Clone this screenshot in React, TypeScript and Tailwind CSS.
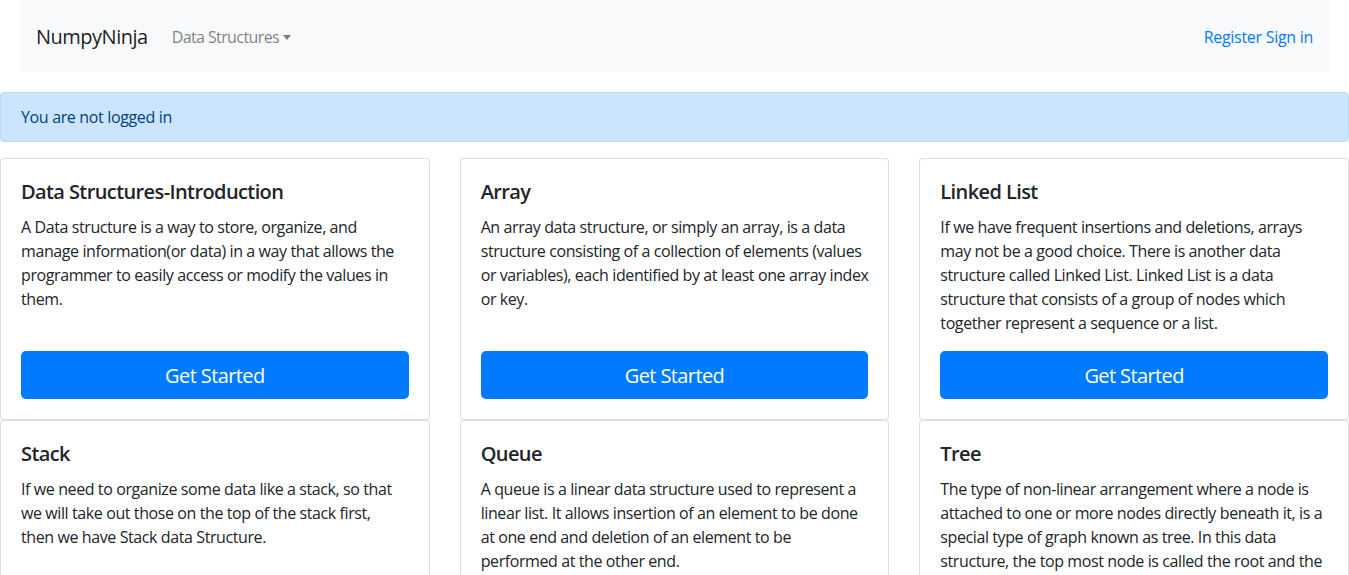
import React from "react";

const cards = [
  {
    title: "Data Structures-Introduction",
    lines: [
      "A Data structure is a way to store, organize, and",
      "manage information(or data) in a way that allows the",
      "programmer to easily access or modify the values in",
      "them.",
    ],
  },
  {
    title: "Array",
    lines: [
      "An array data structure, or simply an array, is a data",
      "structure consisting of a collection of elements (values",
      "or variables), each identified by at least one array index",
      "or key.",
    ],
  },
  {
    title: "Linked List",
    lines: [
      "If we have frequent insertions and deletions, arrays",
      "may not be a good choice. There is another data",
      "structure called Linked List. Linked List is a data",
      "structure that consists of a group of nodes which",
      "together represent a sequence or a list.",
    ],
  },
  {
    title: "Stack",
    lines: [
      "If we need to organize some data like a stack, so that",
      "we will take out those on the top of the stack first,",
      "then we have Stack data Structure.",
    ],
  },
  {
    title: "Queue",
    lines: [
      "A queue is a linear data structure used to represent a",
      "linear list. It allows insertion of an element to be done",
      "at one end and deletion of an element to be",
      "performed at the other end.",
    ],
  },
  {
    title: "Tree",
    lines: [
      "The type of non-linear arrangement where a node is",
      "attached to one or more nodes directly beneath it, is a",
      "special type of graph known as tree. In this data",
      "structure, the top most node is called the root and the",
      "nodes below it are called the child nodes.",
    ],
  },
];

export default function App() {
  return (
    <div
      className="min-h-screen bg-white text-[#212529] text-[16px] leading-[24px]"
      style={{ fontFamily: '"Open Sans", "Noto Sans", sans-serif' }}
    >
      <nav className="mx-[20px] h-[72px] bg-[#f8f9fa] px-[16px] flex items-center">
        <span className="text-[20px] leading-[30px] tracking-[-0.5px] text-[rgba(0,0,0,0.9)] mr-[16px] mt-[2px]">
          NumpyNinja
        </span>
        <span className="px-[8px] text-[rgba(0,0,0,0.5)] tracking-[-0.6px] flex items-center mt-[2px]">
          Data Structures
          <span className="ml-[4px] inline-block w-0 h-0 border-t-[5px] border-t-[rgba(0,0,0,0.5)] border-l-[4px] border-l-transparent border-r-[4px] border-r-transparent"></span>
        </span>
        <div className="ml-auto text-[#007bff] tracking-[-0.3px] flex gap-[4px] mt-[2px]">
          <span>Register</span>
          <span>Sign in</span>
        </div>
      </nav>

      <div className="mt-[20px] mb-[16px] bg-[#cce5ff] border border-[#b8daff] rounded-[4px] px-[20px] py-[12px] text-[#004085] tracking-[-0.35px]">
        You are not logged in
      </div>

      <div className="grid grid-cols-3 gap-x-[30px]">
        {cards.map((c) => (
          <div
            key={c.title}
            className="bg-white border border-[rgba(0,0,0,0.125)] rounded-[4px] flex flex-col"
          >
            <div className="p-[20px] flex flex-col flex-1">
              <h5 className="text-[20px] leading-[24px] font-semibold tracking-[-0.6px] mb-[11px] mt-[1px]">
                {c.title}
              </h5>
              <p className="mb-[16px] tracking-[-0.4px]">
                {c.lines.map((l, i) => (
                  <span key={i} className="block whitespace-nowrap">
                    {l}
                  </span>
                ))}
              </p>
              <button className="mt-auto w-full h-[48px] bg-[#007bff] text-white text-[20px] leading-[30px] tracking-[-0.6px] rounded-[5px] pt-[1px]">
                Get Started
              </button>
            </div>
          </div>
        ))}
      </div>
    </div>
  );
}
